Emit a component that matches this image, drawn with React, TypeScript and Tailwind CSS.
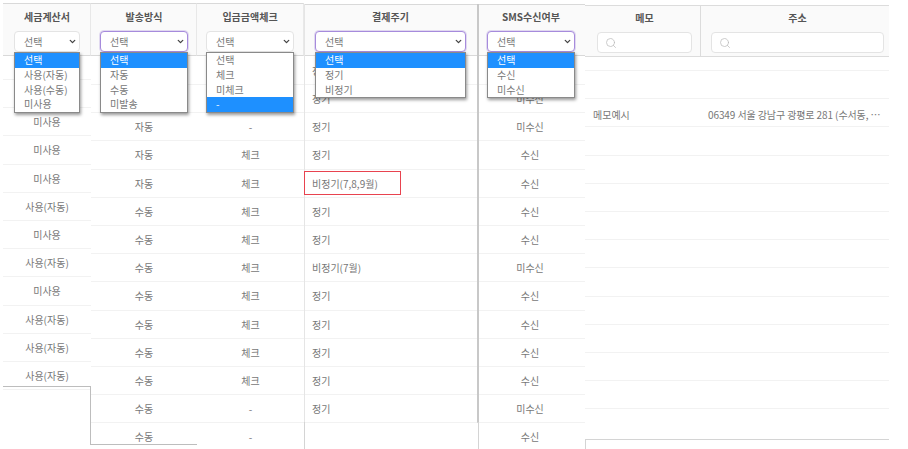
import { ChevronDown, Search } from "lucide-react";

type SelectHeaderProps = {
  title: string;
  options: string[];
  active: number;
  focused?: boolean;
  box: string;
  drop: string;
};

// header with a native-looking select and its opened list
const SelectHeader = ({ title, options, active, focused, box, drop }: SelectHeaderProps) => (
  <div className={`relative bg-[#fafafa] border-t border-b border-[#d9d9d9] ${box}`}>
    <div className="text-center text-[10px] leading-[18px] font-bold text-[#555]">{title}</div>
    <div
      className={`mt-[5px] h-[21px] rounded-[4px] bg-white flex items-center justify-between pl-[9px] pr-[2px] text-[10px] text-[#777] border ${
        focused ? "border-[#a68bdc] shadow-[0_0_0_1px_rgba(169,143,220,0.3)]" : "border-[#e4e4e4]"
      }`}
    >
      <span>선택</span>
      <ChevronDown size={9} strokeWidth={3.5} className="text-[#444]" />
    </div>
    <div className={`absolute z-10 bg-white border border-[#8a8a8a] shadow-[1px_2px_3px_rgba(0,0,0,0.4)] ${drop}`}>
      {options.map((o, i) => (
        <div
          key={o}
          className={`h-[14.8px] pl-[9px] text-[10px] leading-[14.8px] ${
            i === active ? "bg-[#1e90ff] text-white" : "text-[#777]"
          }`}
        >
          {o}
        </div>
      ))}
    </div>
  </div>
);

const Rows = ({ items, first, cell }: { items: string[]; first: string; cell: string }) => (
  <div className="flex flex-col">
    {items.map((t, i) => (
      <div
        key={i}
        className={`border-b border-[#f2f2f2] flex items-center text-[10px] text-[#777] whitespace-nowrap ${
          i === 0 ? first : "h-[28.2px]"
        } ${cell}`}
      >
        {t}
      </div>
    ))}
  </div>
);

const SearchHeader = ({ title, box }: { title: string; box: string }) => (
  <div className={`h-[52px] bg-[#fafafa] border-t border-b border-[#dcdcdc] pt-[3px] ${box}`}>
    <div className="text-center text-[10px] leading-[18px] font-bold text-[#555]">{title}</div>
    <div className="mt-[5px] h-[21px] rounded-[4px] bg-white border border-[#e4e4e4] flex items-center pl-[7px]">
      <Search size={12} strokeWidth={1.5} className="text-[#bbb]" />
    </div>
  </div>
);

const App = () => {
  return (
    <div className="w-[908px] h-[449px] overflow-hidden bg-white flex items-start font-['Noto_Sans_CJK_KR','Noto_Sans',sans-serif]">
      {/* 세금계산서 */}
      <div className="ml-[3px] mt-[3px] w-[88px] flex flex-col">
        <div className="h-[384px] border-b border-[#bdbdbd]">
          <SelectHeader
            title="세금계산서"
            options={["선택", "사용(자동)", "사용(수동)", "미사용"]}
            active={0}
            box="h-[53px] pt-[4px] pl-[11px] pr-[10px] border-r border-r-[#e8e8e8]"
            drop="left-[11px] right-[10px] top-[48px]"
          />
          <Rows
            first="h-[24px]"
            cell="justify-center"
            items={["", "", "미사용", "미사용", "미사용", "사용(자동)", "미사용", "사용(자동)", "미사용", "사용(자동)", "사용(자동)", "사용(자동)"]}
          />
        </div>
        <div className="h-[58px] border-r border-[#bdbdbd]" />
      </div>
      {/* 발송방식 */}
      <div className="mt-[3px] w-[106px] h-[442px] border-b border-[#bdbdbd]">
        <SelectHeader
          title="발송방식"
          options={["선택", "자동", "수동", "미발송"]}
          active={0}
          focused
          box="h-[53px] pt-[4px] pl-[9px] pr-[8px] border-r border-r-[#e8e8e8]"
          drop="left-[9px] right-[8px] top-[48px]"
        />
        <Rows
          first="h-[29px]"
          cell="justify-center"
          items={["", "", "자동", "자동", "자동", "수동", "수동", "수동", "수동", "수동", "수동", "수동", "수동", "수동"]}
        />
      </div>
      {/* 입금금액체크 */}
      <div className="mt-[3px] w-[107px]">
        <SelectHeader
          title="입금금액체크"
          options={["선택", "체크", "미체크", "-"]}
          active={3}
          box="h-[53px] pt-[4px] pl-[9px] pr-[9px] border-r border-r-[#e8e8e8]"
          drop="left-[9px] right-[9px] top-[48px]"
        />
        <Rows
          first="h-[29px]"
          cell="justify-center"
          items={["", "", "-", "체크", "체크", "체크", "체크", "체크", "체크", "체크", "체크", "체크", "-", "-"]}
        />
      </div>
      {/* 결제주기 */}
      <div className="mt-[4px] w-[175px] flex flex-col">
        <div className="relative h-[418px] border-l border-l-[#e5e5e5] border-r-2 border-r-[#c8c8c8]">
          <SelectHeader
            title="결제주기"
            options={["선택", "정기", "비정기"]}
            active={0}
            focused
            box="h-[52px] pt-[3px] pl-[10px] pr-[11px]"
            drop="left-[10px] right-[11px] top-[47px]"
          />
          <Rows
            first="h-[29px]"
            cell="pl-[7px]"
            items={["정기", "정기", "정기", "정기", "비정기(7,8,9월)", "정기", "정기", "비정기(7월)", "정기", "정기", "정기", "정기", "정기"]}
          />
          <div className="absolute left-[-1px] top-[167px] w-[97px] h-[24px] border border-[#e8434f]" />
        </div>
        <div className="h-[30px] border-l border-t border-r border-[#d4d4d4]" />
      </div>
      {/* SMS수신여부 */}
      <div className="mt-[4px] w-[106px]">
        <SelectHeader
          title="SMS수신여부"
          options={["선택", "수신", "미수신"]}
          active={0}
          focused
          box="h-[52px] pt-[3px] pl-[8px] pr-[10px]"
          drop="left-[8px] right-[10px] top-[47px]"
        />
        <Rows
          first="h-[29px]"
          cell="justify-center pr-[4px]"
          items={["", "미수신", "미수신", "수신", "수신", "수신", "수신", "미수신", "수신", "수신", "수신", "수신", "미수신", "수신"]}
        />
      </div>
      {/* 메모 */}
      <div className="mt-[5px] w-[116px] flex flex-col">
        <div className="h-[435px] border-b border-[#d4d4d4]">
          <SearchHeader title="메모" box="pl-[12px] pr-[8px] border-r border-r-[#dcdcdc]" />
          <Rows
            first="h-[14px]"
            cell="pl-[8px] pt-[4px]"
            items={["", "", "메모예시", "", "", "", "", "", "", "", "", "", ""]}
          />
        </div>
        <div className="h-[9px] border-l border-[#d4d4d4]" />
      </div>
      {/* 주소 */}
      <div className="mt-[5px] w-[188px] h-[435px] border-b border-[#d4d4d4]">
        <SearchHeader title="주소" box="pl-[10px] pr-[5px]" />
        <Rows
          first="h-[14px]"
          cell="pl-[7px] pt-[4px] tracking-[-0.1px]"
          items={["", "", "06349 서울 강남구 광평로 281 (수서동, …", "", "", "", "", "", "", "", "", "", ""]}
        />
      </div>
    </div>
  );
};

export default App;
